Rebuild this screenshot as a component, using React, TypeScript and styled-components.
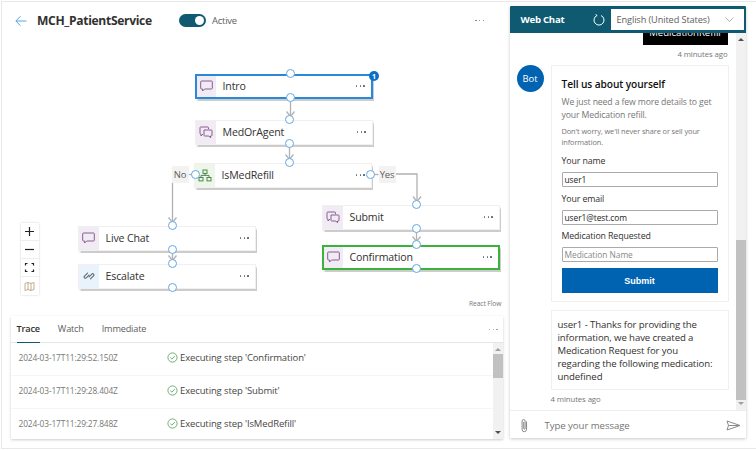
import React from "react";
import styled, { createGlobalStyle } from "styled-components";

const Global = createGlobalStyle`
  html, body { margin: 0; padding: 0; background: #fff; }
  body { font-family: "Open Sans", "Noto Sans", "Liberation Sans", sans-serif; color: #323130; }
  * { box-sizing: border-box; }
`;

const Page = styled.div`
  width: 756px; height: 450px; overflow: hidden; background: #fff;
  padding: 1px 0 1px 1px;
`;
const Frame = styled.div`
  height: 448px; display: flex; border-top: 1.5px solid #e8e8e8; border-bottom: 1.5px solid #e8e8e8; border-left: 1.5px solid #e8e8e8;
`;
const LeftPane = styled.div`
  width: 505px; display: flex; flex-direction: column; flex: none;
`;
const TopBar = styled.div`
  height: 34px; flex: none; display: flex; align-items: center; padding: 3px 0 0 13px;
`;
const BackBtn = styled.span`display: flex; width: 22px; color: #5ba4e0; margin-right: 0;`;
const Title = styled.h1`
  margin: 0; width: 142px; font-size: 12.1px; font-weight: 700; letter-spacing: -0.33px; color: #323130; white-space: nowrap;
`;
const Toggle = styled.span`
  width: 27px; height: 13px; border-radius: 7px; background: #0f5a70; position: relative; display: block; flex: none;
  &::after { content: ""; position: absolute; right: 2px; top: 2px; width: 9px; height: 9px; border-radius: 50%; background: #fff; }
`;
const ToggleLabel = styled.span`font-size: 9.4px; color: #605e5c; margin-left: 6px; flex: 1; letter-spacing: -0.2px;`;
const Dots = styled.span<{ $c?: string }>`
  display: flex; gap: 2.5px; flex: none;
  i { width: 1.2px; height: 1.2px; border-radius: 50%; background: ${p => p.$c || "#605e5c"}; display: block; }
`;
const TopDots = styled.span`margin-right: 23px; display: flex;`;

const Canvas = styled.div`position: relative; flex: none; height: 280px; margin-bottom: 0;`;
const Edges = styled.svg`position: absolute; left: 0; top: 0; width: 505px; height: 280px; pointer-events: none;`;
const Node = styled.div<{ $x: number; $y: number; $state?: "sel" | "ok" }>`
  position: absolute; left: ${p => p.$x}px; top: ${p => p.$y}px; width: 178px; height: 25px; background: #fff;
  display: flex; align-items: center; 
  border: ${p => p.$state === "sel" ? "2px solid #2b88d8" : p.$state === "ok" ? "2px solid #3cb13c" : "1px solid #f1eff0"};
  box-shadow: 0.5px 1.5px 1px rgba(0,0,0,.2);
`;
const NodeIcon = styled.span<{ $bg: string; $thick: boolean }>`
  width: ${p => p.$thick ? 19 : 20}px; align-self: stretch; background: ${p => p.$bg}; display: flex; align-items: center; justify-content: center; flex: none;
`;
const NodeName = styled.span`
  flex: 1; padding-left: 7px; font-size: 10.6px; color: #323130; letter-spacing: -0.15px; white-space: nowrap;
`;
const NodeDots = styled.span`margin-right: 6px; display: flex;`;
const Handle = styled.span<{ $x: number; $y: number }>`
  position: absolute; left: ${p => p.$x - 4.5}px; top: ${p => p.$y - 4.5}px; width: 9px; height: 9px; border-radius: 50%;
  background: #fff; border: 1px solid #62a8e5;
`;
const Badge = styled.span`
  position: absolute; left: 367px; top: 35px; width: 10px; height: 10px; border-radius: 50%; background: #0b6fc9; color: #fff;
  font-size: 7px; font-weight: 700; display: flex; align-items: center; justify-content: center;
`;
const EdgeLabel = styled.span<{ $x: number; $y: number }>`
  position: absolute; left: ${p => p.$x}px; top: ${p => p.$y}px; width: 17px; height: 17px; background: #f3f2f1; color: #605e5c;
  font-size: 9.5px; display: flex; align-items: center; justify-content: center; letter-spacing: -0.2px;
`;
const Controls = styled.div`
  position: absolute; left: 18.500px; top: 187px; width: 18px; background: #fff; display: flex; flex-direction: column;
  box-shadow: 0 0 2px rgba(0,0,0,.2);
`;
const Control = styled.span`
  height: 18px; display: flex; align-items: center; justify-content: center; border-bottom: 1px solid #eee;
  &:last-child { border-bottom: 0; }
`;
const Attribution = styled.span`
  position: absolute; left: 467px; top: 263px; font-size: 6.7px; color: #777; letter-spacing: -0.1px;
`;

const TracePanel = styled.section`
  margin: 0 0 0 8.5px; width: 492px; height: 123px; display: flex; flex-direction: column; background: #fff;
  box-shadow: 0 0.5px 2.5px rgba(0,0,0,.2);
`;
const Tabs = styled.div`
  height: 27px; flex: none; display: flex; padding-left: 6px; gap: 18px; position: relative; border-bottom: 1px solid #e6e6e6;
`;
const Tab = styled.span<{ $on?: boolean }>`
  font-size: 9.2px; color: #605e5c; font-weight: ${p => p.$on ? 600 : 400}; letter-spacing: -0.2px; padding: 6px 0 0; height: 27px;
  border-bottom: ${p => p.$on ? "1.5px solid #0f5a70" : "0"}; color: ${p => p.$on ? "#323130" : "#605e5c"};
`;
const TabDots = styled.span`position: absolute; right: 5px; top: 13px; display: flex;`;
const TraceBody = styled.div`flex: 1; display: flex; min-height: 0;`;
const TraceRows = styled.div`flex: 1; display: flex; flex-direction: column;`;
const TraceRow = styled.div<{ $lift: number }>`
  height: 33px; flex: none; display: flex; align-items: center; padding: 0 0 ${p => p.$lift}px 8px; border-bottom: 1px solid #f5f5f5;
  &:last-child { border-bottom: 0; height: 30px; }
`;
const Stamp = styled.span`width: 148.500px; font-size: 8.4px; color: #797775; letter-spacing: -0.15px; flex: none;`;
const Step = styled.span`display: flex; align-items: center; gap: 2px; font-size: 9.5px; color: #484644; letter-spacing: -0.12px;`;
const VScroll = styled.div<{ $w: number }>`
  width: ${p => p.$w}px; flex: none; background: #f1f1f1; position: relative; display: flex; flex-direction: column; align-items: center;
`;
const Arrow = styled.span<{ $up?: boolean; $c?: string }>`
  display: block; width: 0; height: 0; border-left: 3px solid transparent; border-right: 3px solid transparent;
  ${p => p.$up ? `border-bottom: 3px solid ${p.$c || "#505050"};` : `border-top: 3px solid ${p.$c || "#505050"};`}
  flex: none;
`;
const Thumb = styled.span<{ $h: number; $m: number }>`
  display: block; width: 100%; height: ${p => p.$h}px; background: #c1c1c1; margin-top: ${p => p.$m}px; flex: none;
`;
const Spacer = styled.span`flex: 1;`;

const ChatPane = styled.aside`
  margin: 4px 0 0 2.5px; width: 236px; height: 432px; flex: none; display: flex; flex-direction: column; background: #fff;
  box-shadow: 0 1px 3px rgba(0,0,0,.22);
`;
const ChatHead = styled.header`
  height: 27px; flex: none; background: #0f5a70; display: flex; align-items: center; padding-left: 11px; color: #fff; border-radius: 1px 1px 0 0;
`;
const ChatTitle = styled.span`font-size: 9.6px; font-weight: 700; width: 72px; letter-spacing: -0.25px;`;
const Lang = styled.div`
  margin-left: 6px; margin-right: 2px; height: 21px; flex: 1; background: #fff; color: #605e5c; font-size: 9.2px; display: flex; align-items: center;
  justify-content: space-between; padding: 0 10px 0 6px; letter-spacing: -0.1px;
`;
const ChatBody = styled.div`flex: 1; display: flex; min-height: 0; border-bottom: 1px solid #eee;`;
const Feed = styled.div`flex: 1; display: flex; flex-direction: column; overflow: hidden; position: relative; background: #fff;`;
const Sent = styled.div`
  align-self: flex-end; margin-right: 8px; width: 85px; height: 12px; background: #000; color: #fff; font-size: 9.6px; text-align: center;
  overflow: hidden; line-height: 0px; flex: none;
`;
const Ago = styled.div`
  align-self: flex-end; margin: 4px 8px 0 0; font-size: 7.8px; color: #767676; letter-spacing: -0.1px; line-height: 11px;
`;
const BotRow = styled.div`display: flex; margin: 5px 0 0 7px; align-items: flex-start;`;
const Avatar = styled.span`
  width: 27px; height: 27px; border-radius: 50%; background: #0063b1; color: #fff; font-size: 9.4px; display: flex; align-items: center; justify-content: center; flex: none;
`;
const Bubbles = styled.div`margin-left: 7px; width: 178px; display: flex; flex-direction: column;`;
const Card = styled.div`
  border: 1px solid #f0f0f0; background: #fff; padding: 10px 10px 0; height: 237px; display: flex; flex-direction: column;
`;
const CardTitle = styled.h2`margin: 1px 0 0; font-size: 10.2px; font-weight: 600; color: #111; letter-spacing: -0.1px; line-height: 14px;`;
const CardLead = styled.p`margin: 5px 0 0; font-size: 8.7px; color: #767676; line-height: 12.5px; letter-spacing: -0.13px;`;
const CardNote = styled.p`margin: 5px 0 2.500px; font-size: 7.4px; color: #767676; line-height: 10.5px; letter-spacing: -0.1px;`;
const FieldLabel = styled.label`display: block; font-size: 8.8px; color: #323130; margin-top: 5.500px; letter-spacing: -0.12px; line-height: 12px;`;
const FieldBox = styled.div<{ $ph?: boolean }>`
  height: 15px; margin-top: 5px; border: 1px solid #aaa; border-radius: 1px; font-size: 8.4px; line-height: 13px; padding-left: 2px;
  color: ${p => p.$ph ? "#8a8a8a" : "#222"}; letter-spacing: -0.05px;
`;
const SubmitBtn = styled.div`
  height: 25px; margin-top: 6px; background: #0063b1; color: #fff; font-family: "Liberation Sans", sans-serif; font-weight: 700; font-size: 9px;
  display: flex; align-items: center; justify-content: center;
`;
const TextBubble = styled.div`
  margin-top: 8px; height: 80px; border: 1px solid #f0f0f0; padding: 7px 8px 0 6px; font-size: 9.6px; line-height: 13px; color: #323130; letter-spacing: -0.1px;
`;
const AgoLeft = styled(Ago)`align-self: flex-start; margin: 3.500px 0 0;`;
const Composer = styled.div`height: 27px; flex: none; display: flex; align-items: center; padding: 1px 5px 0 10px;`;
const Placeholder = styled.span`flex: 1; margin-left: 16px; font-size: 9.6px; color: #767676; letter-spacing: -0.05px;`;

const Three = ({ c }: { c?: string }) => (
  <Dots $c={c}><i /><i /><i /></Dots>
);
const Chat = () => (
  <svg width="13" height="12" viewBox="0 0 13 12" fill="none" stroke="#8a5a96" strokeWidth="1">
    <path d="M1.5 1h10a.8.8 0 0 1 .8.8v6.4a.8.8 0 0 1-.8.8H4.6L2.6 11V9H1.5a.8.8 0 0 1-.8-.8V1.800a.8.8 0 0 1 .8-.8z" />
  </svg>
);
const Chats = () => (
  <svg width="14" height="13" viewBox="0 0 14 13" fill="none" stroke="#8a5a96" strokeWidth="1">
    <path d="M9.500 3V1.700a.7.7 0 0 0-.7-.7H1.700a.7.7 0 0 0-.7.7v5.600a.7.7 0 0 0 .7.7H2v2l2-2" />
    <path d="M5 4h7.300a.7.7 0 0 1 .7.7v4.600a.7.7 0 0 1-.7.7H11.500v1.800L9.800 10H5.700a.7.7 0 0 1-.7-.7z" />
  </svg>
);
const Tree = () => (
  <svg width="14" height="13" viewBox="0 0 14 13" fill="none" stroke="#3f7d3f" strokeWidth=".9">
    <rect x="5" y="1" width="4" height="3.400" /><rect x="1" y="8.500" width="4" height="3.400" /><rect x="9" y="8.500" width="4" height="3.400" />
    <path d="M7 4.400v2H3v2M7 6.400h4v2" />
  </svg>
);
const Link = () => (
  <svg width="12" height="10" viewBox="0 0 12 10" fill="none" stroke="#5f6b78" strokeWidth="1.100" strokeLinecap="round">
    <path d="M4.500 2.200L1.500 5.200a1.200 1.200 0 0 0 1.700 1.700L6 4.200" />
    <path d="M7.500 7.800L10.500 4.800a1.200 1.200 0 0 0-1.700-1.700L6 5.800" />
  </svg>
);
const CheckIcon = () => (
  <svg width="11" height="11" viewBox="0 0 11 11" fill="none" stroke="#4c9a5b" strokeWidth=".8">
    <circle cx="5.500" cy="5.500" r="4.600" /><path d="M3.300 5.600l1.600 1.500 2.900-3" />
  </svg>
);
const Ctl = ({ d, c = "#222", w = 1.2 }: { d: string; c?: string; w?: number }) => (
  <svg width="11" height="11" viewBox="0 0 11 11" fill="none" stroke={c} strokeWidth={w}><path d={d} /></svg>
);

const edgeStroke = "#b3b1b3";
const arrow = (x: number, y: number) => `M${x - 4} ${y - 5}L${x} ${y}L${x + 4} ${y - 5}`;

const traceRows: [string, string, number][] = [
  ["2024-03-17T11:29:52.150Z", "Executing step 'Confirmation'", 4],
  ["2024-03-17T11:29:28.404Z", "Executing step 'Submit'", 4],
  ["2024-03-17T11:29:27.848Z", "Executing step 'IsMedRefill'", 2],
];

const CY = 35; // canvas origin offset in page px

export default function App() {
  const nodes: { x: number; y: number; name: string; icon: React.ReactNode; bg: string; state?: "sel" | "ok"; dot?: string }[] = [
    { x: 195, y: 75, name: "Intro", icon: <Chat />, bg: "#f1ecf3", state: "sel" },
    { x: 195, y: 121, name: "MedOrAgent", icon: <Chats />, bg: "#f1ecf3" },
    { x: 194, y: 164, name: "IsMedRefill", icon: <Tree />, bg: "#eef6ea" },
    { x: 322, y: 206, name: "Submit", icon: <Chats />, bg: "#f1ecf3" },
    { x: 322, y: 246, name: "Confirmation", icon: <Chat />, bg: "#f1ecf3", state: "ok" },
    { x: 78, y: 227, name: "Live Chat", icon: <Chat />, bg: "#f1ecf3" },
    { x: 78, y: 265, name: "Escalate", icon: <Link />, bg: "#e9f3fc" },
  ];
  const handles = [
    [291, 75], [291, 99], [290, 121], [290, 145], [290, 164], [196, 176], [371, 176],
    [173, 227], [173, 251], [173, 265], [173, 289], [417, 206], [417, 230], [417, 246], [417, 270],
  ];
  const ox = 2.5, oy = CY + 2.5;
  return (
    <Page>
      <Global />
      <Frame>
        <LeftPane>
          <TopBar>
            <BackBtn>
              <svg width="12" height="12" viewBox="0 0 12 12" fill="none" stroke="#5ba4e0" strokeWidth="1"><path d="M11.500 6H1M5.500 1.200L.8 6l4.700 4.800" /></svg>
            </BackBtn>
            <Title>MCH_PatientService</Title>
            <Toggle />
            <ToggleLabel>Active</ToggleLabel>
            <TopDots><Three c="#777" /></TopDots>
          </TopBar>
          <Canvas>
            <Edges viewBox={`0 0 505 280`}>
              <g transform={`translate(${-ox} ${-oy})`} fill="none" stroke={edgeStroke} strokeWidth="1.300">
                <path d="M291 99V121" /><path d={arrow(291, 118)} />
                <path d="M290 145V164" /><path d={arrow(290, 161)} />
                <path d="M173 184V227" /><path d={arrow(173, 224)} />
                <path d="M173 251V265" /><path d={arrow(173, 262)} />
                <path d="M396 175.500H417.500V206" /><path d={arrow(417.5, 203)} />
                <path d="M417 230V246" /><path d={arrow(417, 243)} />
                <path d="M189 176H196" /><path d="M371 176H379" />
              </g>
            </Edges>
            {nodes.map(n => (
              <Node key={n.name} $x={n.x - ox} $y={n.y - oy} $state={n.state}>
                <NodeIcon $bg={n.bg} $thick={!!n.state}>{n.icon}</NodeIcon>
                <NodeName>{n.name}</NodeName>
                <NodeDots><Three c="#5c6a74" /></NodeDots>
              </Node>
            ))}
            {handles.map(([x, y]) => <Handle key={`${x}-${y}`} $x={x - ox} $y={y - oy} />)}
            <Badge>1</Badge>
            <EdgeLabel $x={172 - ox} $y={167 - oy}>No</EdgeLabel>
            <EdgeLabel $x={379 - ox} $y={167 - oy}>Yes</EdgeLabel>
            <Controls>
              <Control><Ctl d="M5.500 1v9M1 5.500h9" /></Control>
              <Control><Ctl d="M1 5.500h9" /></Control>
              <Control><Ctl d="M1.500 3.500v-2h2M7.500 1.500h2v2M9.500 7.500v2h-2M3.500 9.500h-2v-2" /></Control>
              <Control><Ctl c="#b59b70" w={.8} d="M1 2.500l3-1 3 1 3-1v7l-3 1-3-1-3 1zM4 1.500v7M7 2.500v7" /></Control>
            </Controls>
            <Attribution>React Flow</Attribution>
          </Canvas>
          <TracePanel>
            <Tabs>
              <Tab $on>Trace</Tab>
              <Tab>Watch</Tab>
              <Tab>Immediate</Tab>
              <TabDots><Three c="#8aa0aa" /></TabDots>
            </Tabs>
            <TraceBody>
              <TraceRows>
                {traceRows.map(([t, s, lift]) => (
                  <TraceRow key={t} $lift={lift}>
                    <Stamp>{t}</Stamp>
                    <Step><CheckIcon />{s}</Step>
                  </TraceRow>
                ))}
              </TraceRows>
              <VScroll $w={10}>
                <Thumb $h={0} $m={5} />
                <Arrow $up $c="#a0a0a0" />
                <Thumb $h={24} $m={3} />
                <Spacer />
                <Arrow />
                <Thumb $h={0} $m={5} />
              </VScroll>
            </TraceBody>
          </TracePanel>
        </LeftPane>
        <ChatPane>
          <ChatHead>
            <ChatTitle>Web Chat</ChatTitle>
            <svg width="12" height="12" viewBox="0 0 12 12" fill="none" stroke="#fff" strokeWidth="1">
              <path d="M4 1.500A5 5 0 1 0 8 1.500M4.300 1.600L2.600 .5" />
            </svg>
            <Lang>
              <span>English (United States)</span>
              <svg width="9" height="5" viewBox="0 0 9 5" fill="none" stroke="#a0a0a0" strokeWidth=".8"><path d="M.5.500L4.500 4.500L8.500.5" /></svg>
            </Lang>
          </ChatHead>
          <ChatBody>
            <Feed>
              <Sent>MedicationRefill</Sent>
              <Ago>4 minutes ago</Ago>
              <BotRow>
                <Avatar>Bot</Avatar>
                <Bubbles>
                  <Card>
                    <CardTitle>Tell us about yourself</CardTitle>
                    <CardLead>We just need a few more details to get your Medication refill.</CardLead>
                    <CardNote>Don't worry, we'll never share or sell your information.</CardNote>
                    <FieldLabel>Your name</FieldLabel>
                    <FieldBox>user1</FieldBox>
                    <FieldLabel>Your email</FieldLabel>
                    <FieldBox>user1@test.com</FieldBox>
                    <FieldLabel>Medication Requested</FieldLabel>
                    <FieldBox $ph>Medication Name</FieldBox>
                    <SubmitBtn>Submit</SubmitBtn>
                  </Card>
                  <TextBubble>user1 - Thanks for providing the information, we have created a Medication Request for you regarding the following medication: undefined</TextBubble>
                  <AgoLeft>4 minutes ago</AgoLeft>
                </Bubbles>
              </BotRow>
            </Feed>
            <VScroll $w={10}>
              <Thumb $h={0} $m={5} />
              <Arrow $up />
              <Thumb $h={160} $m={199} />
              <Spacer />
              <Arrow $c="#a0a0a0" />
              <Thumb $h={0} $m={5} />
            </VScroll>
          </ChatBody>
          <Composer>
            <svg width="9" height="15" viewBox="0 0 9 15" fill="none" stroke="#8a8a8a" strokeWidth="1">
              <path d="M6.500 3.500v8a2.200 2.200 0 0 1-4.400 0V3a1.500 1.500 0 0 1 3 0v7.500a.7.7 0 0 1-1.400 0V4" />
            </svg>
            <Placeholder>Type your message</Placeholder>
            <svg width="15" height="11" viewBox="0 0 15 11" fill="none" stroke="#8a8a8a" strokeWidth="1">
              <path d="M1 1l13 4.500L1 10l1.500-4.500zM2.500 5.500H14" />
            </svg>
          </Composer>
        </ChatPane>
      </Frame>
    </Page>
  );
}
